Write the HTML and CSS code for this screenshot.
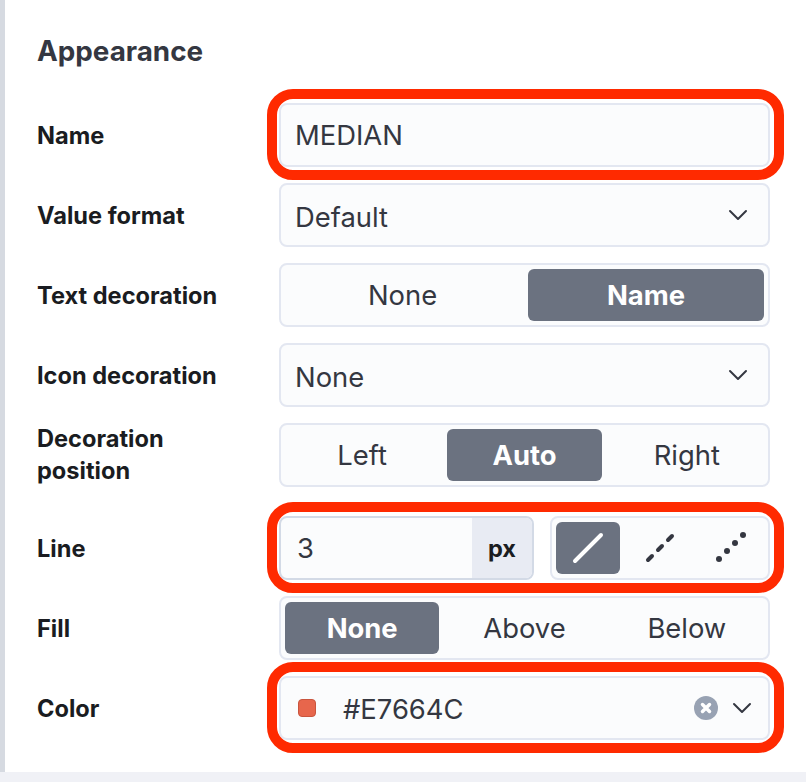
FILE: index.html
```html
<!DOCTYPE html>
<html lang="en">
  <head>
    <meta charset="UTF-8" />
    <meta name="viewport" content="width=device-width, initial-scale=1.0" />
    <title>Appearance</title>
    <link rel="stylesheet" href="styles.css">
  </head>
  <body>
    <div class="panel">
      <h2 class="title">Appearance</h2>

      <div class="row">
        <div class="label">Name</div>
        <div class="control">
          <div class="box">MEDIAN</div>
          <div class="callout"></div>
        </div>
      </div>

      <div class="row">
        <div class="label">Value format</div>
        <div class="control">
          <div class="box select">
            <span class="select-value">Default</span>
            <svg class="chevron" viewBox="0 0 20 12"><path d="M2 2l8 8 8-8" /></svg>
          </div>
        </div>
      </div>

      <div class="row">
        <div class="label">Text decoration</div>
        <div class="control">
          <div class="segments two">
            <button class="seg">None</button>
            <button class="seg active">Name</button>
          </div>
        </div>
      </div>

      <div class="row">
        <div class="label">Icon decoration</div>
        <div class="control">
          <div class="box select">
            <span class="select-value">None</span>
            <svg class="chevron" viewBox="0 0 20 12"><path d="M2 2l8 8 8-8" /></svg>
          </div>
        </div>
      </div>

      <div class="row row-tall">
        <div class="label label-wrap">Decoration<br>position</div>
        <div class="control">
          <div class="segments three">
            <button class="seg">Left</button>
            <button class="seg active">Auto</button>
            <button class="seg">Right</button>
          </div>
        </div>
      </div>

      <div class="row">
        <div class="label">Line</div>
        <div class="control line-control">
          <div class="unit-input">
            <div class="unit-value">3</div>
            <div class="unit">px</div>
          </div>
          <div class="segments line-styles">
            <button class="seg active">
              <svg class="line-icon" viewBox="0 0 32 32"><path d="M3 29L29 3" /></svg>
            </button>
            <button class="seg">
              <svg class="line-icon" viewBox="0 0 32 32"><path d="M4 28l4-4M14 18l4-4M24 8l4-4" /></svg>
            </button>
            <button class="seg">
              <svg class="line-icon dots" viewBox="0 0 32 32">
                <circle cx="3" cy="27" r="3" />
                <circle cx="11" cy="19" r="3" />
                <circle cx="19" cy="11" r="3" />
                <circle cx="27" cy="3" r="3" />
              </svg>
            </button>
          </div>
          <div class="callout"></div>
        </div>
      </div>

      <div class="row">
        <div class="label">Fill</div>
        <div class="control">
          <div class="segments three">
            <button class="seg active">None</button>
            <button class="seg">Above</button>
            <button class="seg">Below</button>
          </div>
        </div>
      </div>

      <div class="row">
        <div class="label">Color</div>
        <div class="control">
          <div class="box color-box">
            <span class="swatch"></span>
            <span class="color-value">#E7664C</span>
            <svg class="clear" viewBox="0 0 24 24">
              <circle cx="12" cy="12" r="12" />
              <path d="M8.500 8.500l7 7M15.500 8.500l-7 7" />
            </svg>
            <svg class="chevron" viewBox="0 0 20 12"><path d="M2 2l8 8 8-8" /></svg>
          </div>
          <div class="callout"></div>
        </div>
      </div>
    </div>
    <div class="footer"></div>
  </body>
</html>
```

FILE: styles.css
```css
* {
  box-sizing: border-box;
}
body {
  font-family: Inter, "Liberation Sans", sans-serif;
  margin: 0;
  background-color: #fff;
  color: #343741;
  overflow: hidden;
}
.panel {
  height: 772px;
  border-left: 5px solid #d6dae1;
  padding: 37px 36px 0 32px;
}
.title {
  margin: 0 0 38px;
  font-size: 27.800px;
  line-height: 28px;
  font-weight: 700;
  color: #343741;
}
.row {
  display: grid;
  grid-template-columns: 242px 1fr;
  align-items: center;
  height: 64px;
  margin-bottom: 16px;
}
.row-tall {
  margin-bottom: 29px;
}
.label {
  padding-top: 2px;
  font-size: 23.600px;
  line-height: 32px;
  font-weight: 700;
  color: #1a1c21;
}
.label-wrap {
  padding-top: 0;
}
.control {
  position: relative;
  height: 64px;
}
.box {
  display: flex;
  align-items: center;
  height: 100%;
  padding: 0 14px;
  background-color: #fbfcfd;
  border: 2px solid #e3e7f1;
  border-radius: 8px;
  font-size: 27.400px;
}
.select {
  justify-content: space-between;
  padding-right: 20px;
}
.select-value {
  padding-top: 3px;
}
.chevron {
  width: 20px;
  height: 12px;
  fill: none;
  stroke: #343741;
  stroke-width: 2;
  stroke-linecap: round;
  stroke-linejoin: round;
}
.segments {
  display: grid;
  gap: 8px;
  height: 100%;
  padding: 4px;
  background-color: #fbfcfd;
  border: 2px solid #e3e7f1;
  border-radius: 8px;
}
.two {
  grid-template-columns: 1fr 236px;
}
.three {
  grid-template-columns: repeat(3, 1fr);
}
.seg {
  display: flex;
  align-items: center;
  justify-content: center;
  padding: 0;
  border: none;
  border-radius: 6px;
  background: none;
  font-family: inherit;
  font-size: 27.400px;
  color: #343741;
}
.seg.active {
  background-color: #6b7280;
  color: #fff;
  font-weight: 700;
}
.line-control {
  display: flex;
  gap: 16px;
}
.unit-input {
  display: flex;
  width: 255px;
  border: 2px solid #d3dae6;
  border-radius: 8px;
  overflow: hidden;
  background-color: #fbfcfd;
}
.unit-value {
  flex: 1;
  display: flex;
  align-items: center;
  padding-left: 16px;
  font-size: 27.400px;
}
.unit {
  display: flex;
  align-items: center;
  justify-content: center;
  width: 60px;
  background-color: #e8ebf3;
  font-size: 23.600px;
  font-weight: 700;
  color: #1a1c21;
}
.line-styles {
  grid-template-columns: repeat(3, 64px);
  width: 220px;
}
.line-icon {
  width: 32px;
  height: 32px;
  fill: none;
  stroke: #343741;
  stroke-width: 4;
  stroke-linecap: round;
}
.seg.active .line-icon {
  stroke: #fff;
}
.line-icon.dots {
  overflow: visible;
  fill: #343741;
  stroke: none;
}
.color-box {
  padding: 0 16px 0 17px;
}
.swatch {
  width: 18px;
  height: 18px;
  border-radius: 4px;
  background-color: #e7664c;
  border: 1px solid #c9553e;
}
.color-value {
  flex: 1;
  margin-left: 27px;
  padding-top: 1px;
}
.clear {
  width: 24px;
  height: 24px;
  margin-right: 14px;
  fill: #98a2b3;
  stroke: #fff;
}
.clear path {
  fill: none;
  stroke-width: 3.500;
  stroke-linecap: round;
}
.clear circle {
  stroke: none;
}
.callout {
  position: absolute;
  top: -14px;
  left: -12px;
  right: -14px;
  bottom: -13px;
  border: 10px solid #ff2a00;
  border-radius: 26px;
  pointer-events: none;
}
.footer {
  height: 10px;
  background-color: #f0f1f6;
}
```
